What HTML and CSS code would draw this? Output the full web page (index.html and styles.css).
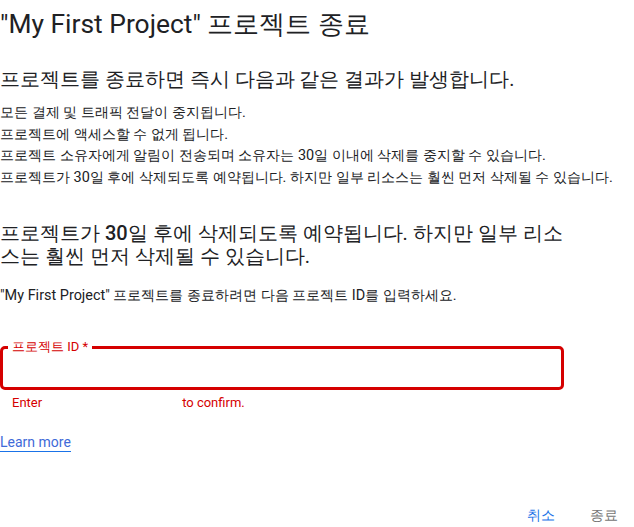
FILE: index.html
```html
<!DOCTYPE html>
<html lang="ko">
<head>
<meta charset="utf-8">
<link rel="stylesheet" href="styles.css">
</head>
<body>
<div class="dialog">
  <h1 class="title">"My First Project" 프로젝트 종료</h1>
  <h2 class="subtitle">프로젝트를 종료하면 즉시 다음과 같은 결과가 발생합니다.</h2>
  <ul class="effects">
    <li>모든 결제 및 트래픽 전달이 중지됩니다.</li>
    <li>프로젝트에 액세스할 수 없게 됩니다.</li>
    <li>프로젝트 소유자에게 알림이 전송되며 소유자는 30일 이내에 삭제를 중지할 수 있습니다.</li>
    <li>프로젝트가 30일 후에 삭제되도록 예약됩니다. 하지만 일부 리소스는 훨씬 먼저 삭제될 수 있습니다.</li>
  </ul>
  <h2 class="warning">프로젝트가 <b class="num">30</b>일 후에 삭제되도록 예약됩니다. 하지만 일부 리소스는 훨씬 먼저 삭제될 수 있습니다.</h2>
  <p class="instr">"My First Project" 프로젝트를 종료하려면 다음 프로젝트 ID를 입력하세요.</p>
  <div class="field">
    <fieldset class="outline">
      <legend class="label">프로젝트 ID *</legend>
      <input class="input" type="text" aria-label="프로젝트 ID">
    </fieldset>
    <div class="hint"><span>Enter</span><span class="hidden-id"></span><span>to confirm.</span></div>
  </div>
  <a class="learn" href="#">Learn more</a>
  <div class="actions">
    <button class="btn cancel">취소</button>
    <button class="btn shut" disabled>종료</button>
  </div>
</div>
</body>
</html>
```
FILE: styles.css
```css
* { box-sizing: border-box; }
html, body { margin: 0; padding: 0; background: #fff; }
body {
  font-family: Roboto, sans-serif;
  color: #202124;
}
.dialog { width: 634px; padding: 0; }
.title {
  margin: 0;
  padding-top: 8px;
  font-size: 26.4px;
  font-weight: 400;
  line-height: 32px;
  color: #202124;
}
.subtitle {
  margin: 26px 0 0;
  font-size: 19.6px;
  font-weight: 400;
  line-height: 28px;
}
.effects {
  list-style: none;
  margin: 8px 0 0;
  padding: 0;
  font-size: 14.45px;
  line-height: 21.5px;
  white-space: nowrap;
}
.warning {
  margin: 34px 0 0;
  width: 570px;
  font-size: 20px;
  font-weight: 400;
  line-height: 23px;
}
.num { font-weight: 500; }
.instr {
  margin: 18px 0 0;
  font-size: 14.45px;
  line-height: 20px;
}
.field { margin-top: 35px; width: 564px; }
.outline {
  margin: 0;
  padding: 0 5px;
  border: 3px solid #d50000;
  border-radius: 5px;
  height: 49px;
}
.label {
  padding: 0 4px;
  margin: 0;
  font-size: 13px;
  line-height: 12px;
  color: #d50000;
}
.input {
  border: none;
  outline: none;
  width: 100%;
  height: 24px;
  background: transparent;
  font: inherit;
}
.hint {
  display: flex;
  padding-left: 12px;
  margin-top: 5px;
  font-size: 13px;
  line-height: 16px;
  color: #d50000;
}
.hidden-id { width: 140px; }
.learn {
  display: inline-block;
  margin-top: 22px;
  font-size: 14px;
  line-height: 18px;
  color: #3f6ad8;
  text-decoration: none;
  border-bottom: 1px solid #1a73e8;
}
.actions {
  display: flex;
  justify-content: flex-end;
  gap: 19px;
  margin-top: 53px;
  padding-right: 8px;
}
.btn {
  border: none;
  background: none;
  font-family: Roboto, sans-serif;
  font-size: 14px;
  padding: 0 8px;
  line-height: 20px;
}
.cancel { color: #1a73e8; }
.shut { color: #757575; }
```
